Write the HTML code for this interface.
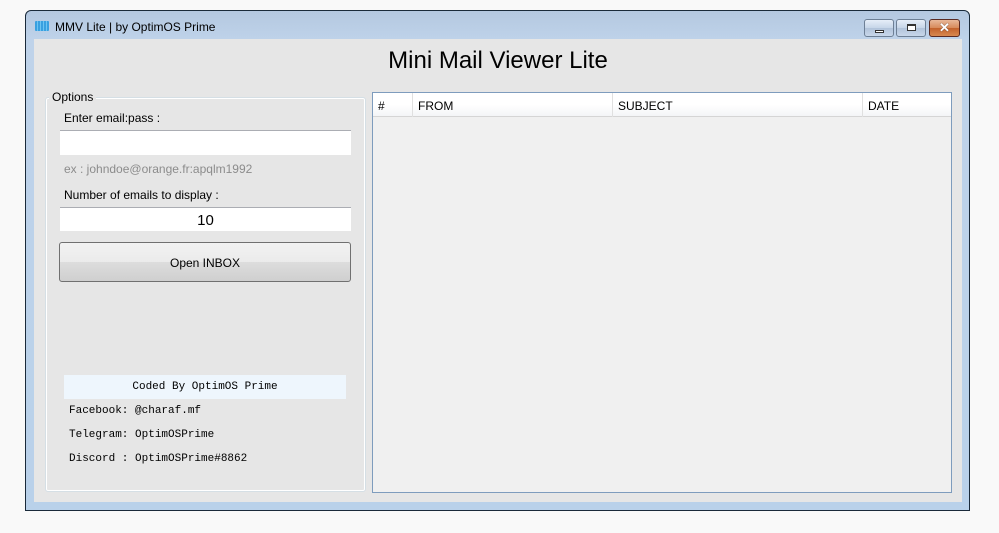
<!DOCTYPE html>
<html><head><style>
*{margin:0;padding:0;box-sizing:border-box}
body{width:999px;height:533px;background:#f9f9f9;position:relative;overflow:hidden;font-family:"Liberation Sans",sans-serif;font-size:12px;color:#000}
.a{position:absolute}
.win{left:25px;top:10px;width:945px;height:501px;border:1px solid #1a2a3a;border-radius:6px 6px 0 0;background:linear-gradient(#b4c8e0,#bfd3ea 30px,#b9d1ea);}
.client{left:34px;top:39px;width:928px;height:463px;background:#e6e6e6}
.mono{font-family:"Liberation Mono","DejaVu Sans Mono",monospace;font-size:11px}
.btn{border:1px solid #707070;border-radius:3px;background:linear-gradient(#f2f2f2,#ebebeb 50%,#dddddd 50%,#cfcfcf)}
.cap{height:18px;top:19px;border:1px solid #6d7f95;border-radius:3px;background:linear-gradient(#e6eef8,#c6d5e8 50%,#b1c3da 50%,#c8d7ea)}
</style></head><body>
<div class="a win"></div>
<div class="a" style="left:35px;top:21px;width:14px;height:10px;background:repeating-linear-gradient(90deg,#39a0e0 0 2px,#6cc4f2 2px 3px);border-radius:1px"></div>
<div class="a" style="left:55px;top:20px;font-size:12px">MMV Lite | by OptimOS Prime</div>
<div class="a cap" style="left:864px;width:30px"><div class="a" style="left:10px;top:10px;width:9px;height:3px;border:1px solid #333;background:#fff"></div></div>
<div class="a cap" style="left:896px;width:30px"><div class="a" style="left:10px;top:4px;width:9px;height:7px;border:1px solid #333;background:#fff;border-top-width:2px"></div></div>
<div class="a cap" style="left:929px;width:31px;border-color:#5a2a22;background:linear-gradient(#e8b899,#d78a5a 50%,#c2612b 50%,#d8884f)"><div class="a" style="left:9px;top:0px;color:#fff;font-weight:bold;font-size:13px;text-shadow:0 0 1px #333">✕</div></div>
<div class="a client"></div>
<div class="a" style="left:34px;top:47px;width:928px;text-align:center;font-size:24px">Mini Mail Viewer Lite</div>
<div class="a" style="left:45px;top:97px;width:321px;height:395px;border:1px solid #d5dfe5;border-radius:3px;box-shadow:inset 0 0 0 1px #fff"></div>
<div class="a" style="left:49px;top:90px;background:#e6e6e6;padding:0 3px">Options</div>
<div class="a" style="left:64px;top:111px">Enter email:pass :</div>
<div class="a" style="left:60px;top:130px;width:291px;height:25px;background:#fff;border-top:1px solid #abadb3"></div>
<div class="a" style="left:64px;top:162px;color:#8c8c8c">ex : johndoe@orange.fr:apqlm1992</div>
<div class="a" style="left:64px;top:188px">Number of emails to display :</div>
<div class="a" style="left:60px;top:207px;width:291px;height:24px;background:#fff;border-top:1px solid #abadb3;text-align:center;font-size:15px;line-height:26px">10</div>
<div class="a btn" style="left:59px;top:242px;width:292px;height:40px;text-align:center;line-height:40px">Open INBOX</div>
<div class="a mono" style="left:64px;top:375px;width:282px;height:24px;background:#eef6fd;text-align:center;line-height:24px">Coded By OptimOS Prime</div>
<div class="a mono" style="left:69px;top:405px">Facebook: @charaf.mf</div>
<div class="a mono" style="left:69px;top:429px">Telegram: OptimOSPrime</div>
<div class="a mono" style="left:69px;top:453px">Discord : OptimOSPrime#8862</div>
<div class="a" style="left:372px;top:92px;width:580px;height:401px;background:#f0f0f0;border:1px solid #7e9cbd"></div>
<div class="a" style="left:373px;top:93px;width:578px;height:24px;background:linear-gradient(#fff,#fff 50%,#f4f5f7);border-bottom:1px solid #d5d5d5"></div>
<div class="a" style="left:412px;top:93px;width:1px;height:24px;background:#e0e0e0"></div>
<div class="a" style="left:612px;top:93px;width:1px;height:24px;background:#e0e0e0"></div>
<div class="a" style="left:862px;top:93px;width:1px;height:24px;background:#e0e0e0"></div>
<div class="a" style="left:378px;top:99px">#</div>
<div class="a" style="left:418px;top:99px">FROM</div>
<div class="a" style="left:618px;top:99px">SUBJECT</div>
<div class="a" style="left:868px;top:99px">DATE</div>
</body></html>
